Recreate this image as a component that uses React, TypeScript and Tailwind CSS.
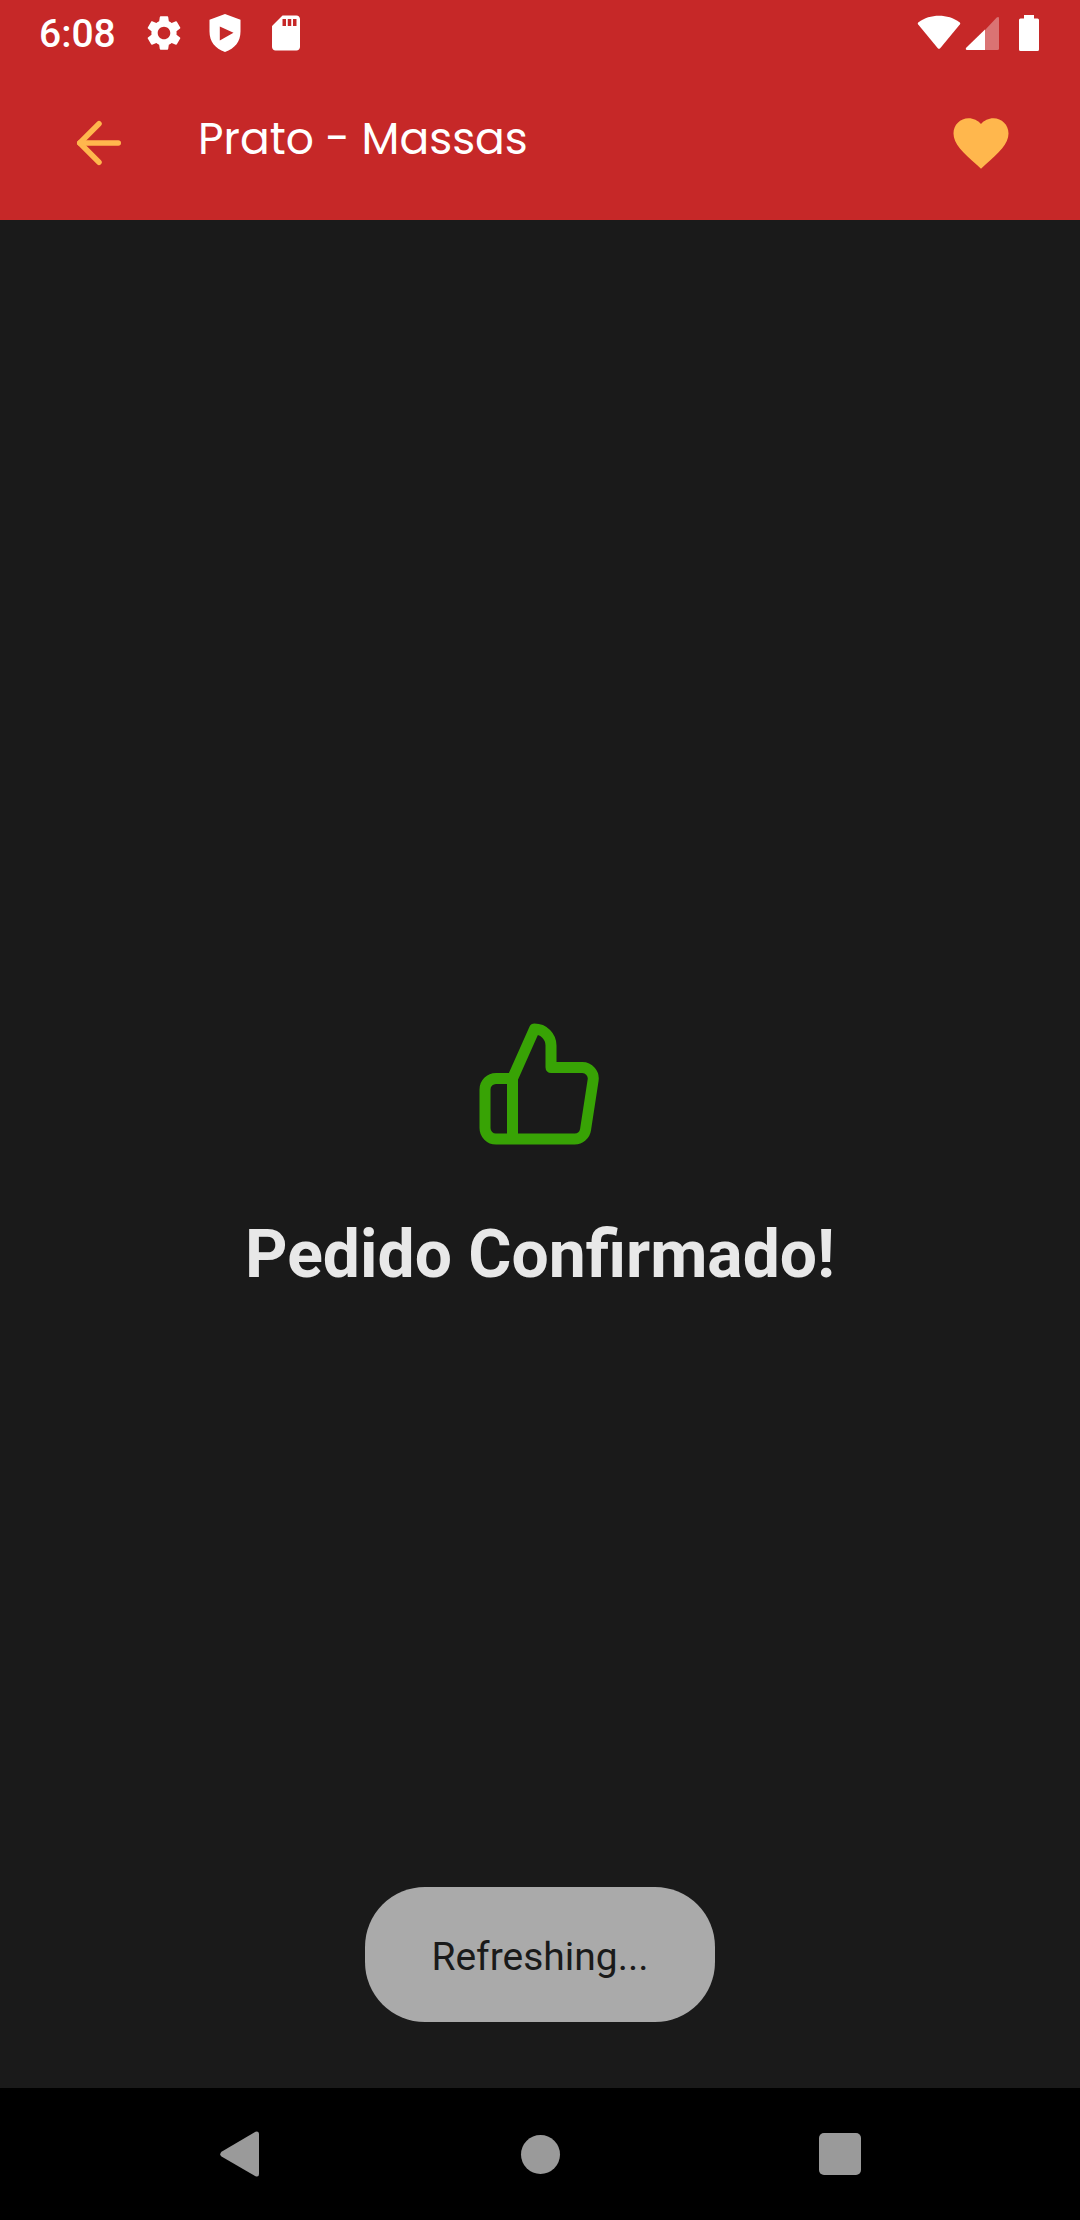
import React from "react";
import { ArrowLeft } from "lucide-react";
import { MdFavorite, MdSdCard, MdSettings } from "react-icons/md";

function StatusBar() {
  return (
    <div className="flex h-[66px] items-center justify-between pr-[41px] pl-[39px] text-white">
      <div className="flex items-center gap-[19px]">
        <span className="mt-0.5 mr-2 text-[39px] leading-[46px] font-medium">6:08</span>
        <MdSettings className="size-[42px]" aria-hidden="true" />
        <svg className="size-[42px]" viewBox="0 0 42 42" fill="currentColor" aria-hidden="true">
          <path
            fillRule="evenodd"
            d="M21 2L5.500 7.700V19.500C5.500 29.500 11 36.500 21 40C31 36.500 36.500 29.500 36.500 19.500V7.700ZM15.800 14.500L29.500 20.700L15.800 28.500Z"
          />
        </svg>
        <MdSdCard className="size-[42px]" aria-hidden="true" />
      </div>
      <div className="flex items-center">
        <svg className="h-[36px] w-[44px]" viewBox="0 0 44 36" fill="currentColor" aria-hidden="true">
          <path d="M1.200 9.500Q0.200 8.200 1.500 7.200C13 -1.400 31 -1.400 42.500 7.200Q43.800 8.200 42.800 9.500L23.200 33.200Q22 34.500 20.800 33.200Z" />
        </svg>
        <svg className="ml-1 h-[36px] w-[34px]" viewBox="0 0 34 36" fill="currentColor" aria-hidden="true">
          <path fillOpacity="0.35" d="M20 15L31.500 2.700Q34 1 34 3.500V33.500Q34 35 32.500 35H20Z" />
          <path d="M20 14.500V35H2Q0 34.500 1.200 32.800Z" />
        </svg>
        <svg className="ml-5 h-[36px] w-[20px]" viewBox="0 0 20 36" fill="currentColor" aria-hidden="true">
          <path d="M5 0H15V3.500H18.500Q20 3.500 20 5V34.500Q20 36 18.500 36H1.500Q0 36 0 34.500V5Q0 3.500 1.500 3.500H5Z" />
        </svg>
      </div>
    </div>
  );
}

function AppBar() {
  return (
    <div className="flex h-[154px] items-center px-[66px] text-[#ffb74d]">
      <button type="button" aria-label="Voltar" className="shrink-0">
        <ArrowLeft className="size-[66px]" />
      </button>
      <h1 className="min-w-0 flex-1 pb-2 pl-[66px] font-[Poppins,Inter,sans-serif] text-[44px] leading-[66px] font-normal text-white [font-feature-settings:'cv11']">
        Prato - Massas
      </h1>
      <button type="button" aria-label="Favorito" className="shrink-0">
        <MdFavorite className="size-[66px]" />
      </button>
    </div>
  );
}

function NavBar() {
  return (
    <nav className="grid h-[132px] grid-cols-3 items-center justify-items-center bg-black px-[90px] text-[#9a9a9a]">
      <button type="button" aria-label="Back">
        <svg className="size-12" viewBox="0 0 48 48" fill="currentColor" aria-hidden="true">
          <path d="M5.500 21.800L39.500 1.800Q43 0.600 43 4V44Q43 47.400 39.500 46.200L5.500 26.400Q3 24.200 5.500 21.800Z" />
        </svg>
      </button>
      <button type="button" aria-label="Home">
        <span className="block size-[39px] rounded-full bg-current" />
      </button>
      <button type="button" aria-label="Recents">
        <span className="block size-[42px] rounded-[5px] bg-current" />
      </button>
    </nav>
  );
}

export default function App() {
  return (
    <div className="flex min-h-screen flex-col bg-[#1a1a1a] font-[Roboto,sans-serif]">
      <header className="bg-[#c62828]">
        <StatusBar />
        <AppBar />
      </header>
      <main className="relative flex flex-1 flex-col items-center justify-center gap-[66px] pt-1">
        <svg
          className="size-[132px] text-[#38a305]"
          viewBox="0 0 24 24"
          fill="none"
          stroke="currentColor"
          strokeWidth="2"
          strokeLinecap="round"
          strokeLinejoin="round"
          aria-hidden="true"
        >
          <path d="M14 9V5a3 3 0 0 0-3-3l-4 9v11h11.280a2 2 0 0 0 2-1.700l1.380-9a2 2 0 0 0-2-2.300zM7 22H4a2 2 0 0 1-2-2v-7a2 2 0 0 1 2-2h3" />
        </svg>
        <p className="px-4 text-center text-[66px] leading-[78px] font-bold text-[#e8e8e8]">Pedido Confirmado!</p>
        <div className="absolute inset-x-0 bottom-[66px] flex justify-center">
          <div role="status" className="rounded-[60px] bg-[#aaaaaa] px-[66px] pt-[47px] pb-[42px] text-[39px] leading-[46px] text-[#1a1a1a]">
            Refreshing...
          </div>
        </div>
      </main>
      <NavBar />
    </div>
  );
}
